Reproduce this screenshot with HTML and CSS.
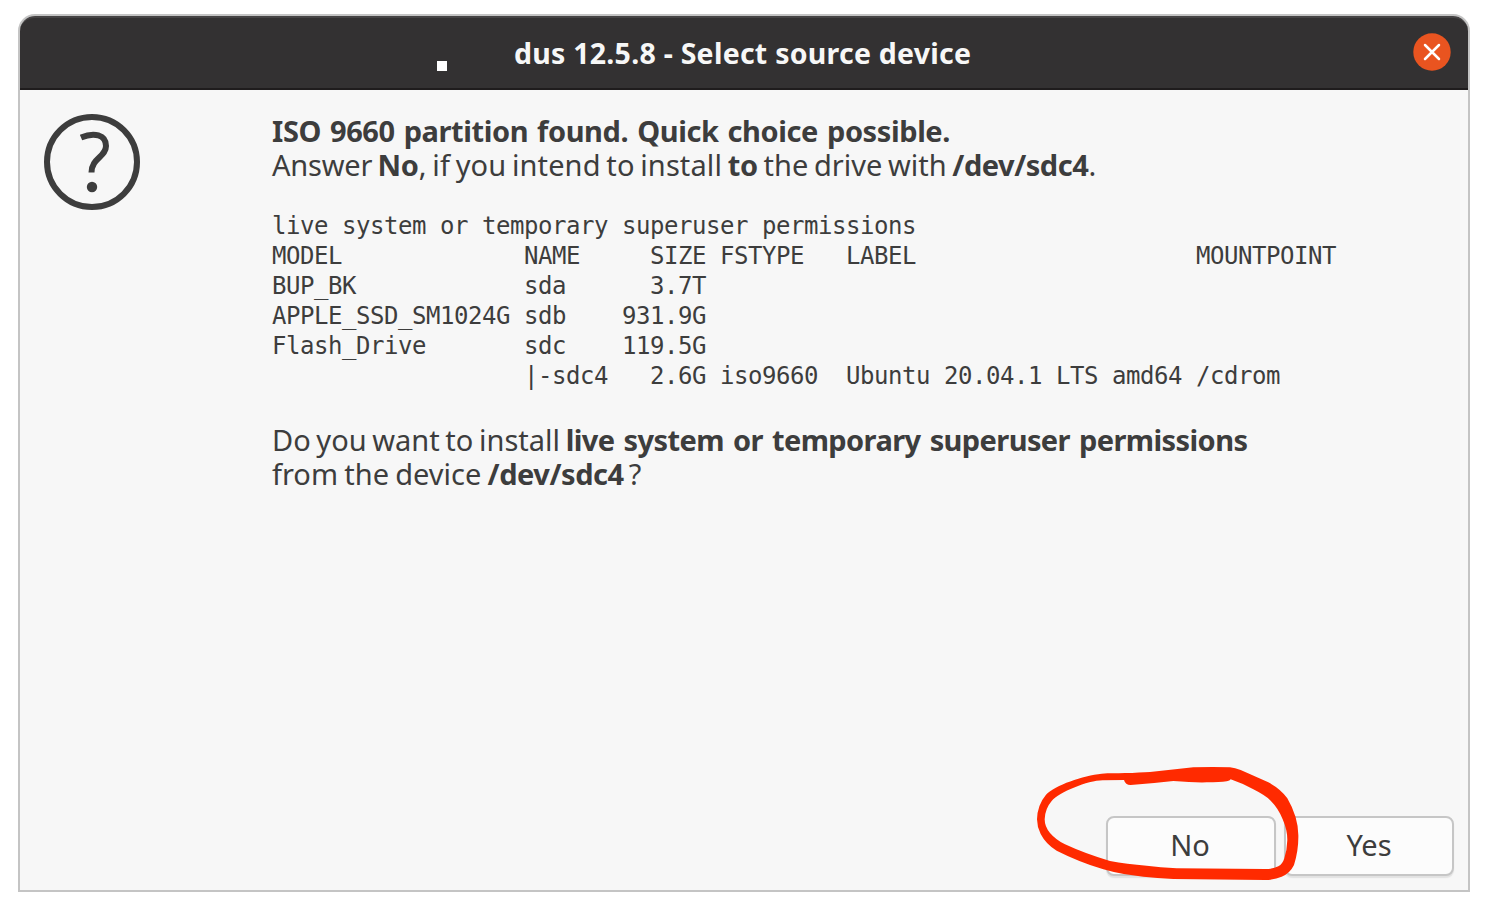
FILE: index.html
```
<!DOCTYPE html>
<html lang="en">
<head>
<meta charset="utf-8">
<title>dus 12.5.8 - Select source device</title>
<link rel="stylesheet" href="styles.css">
</head>
<body>
<div class="window">
  <header class="titlebar">
    <h1 class="title">dus 12.5.8 - Select source device</h1>
    <span class="speck"></span>
    <button class="close" aria-label="Close">
      <svg width="38" height="38" viewBox="0 0 38 38"><circle cx="19" cy="19" r="18.7" fill="#e95420"/><path d="M12 12 26 26M26 12 12 26" stroke="#fff" stroke-width="2.5" stroke-linecap="round"/></svg>
    </button>
  </header>
  <main class="content">
    <svg class="question" width="96" height="96" viewBox="0 0 96 96" fill="none" stroke="#3d3d3d">
      <circle cx="48" cy="48" r="45" stroke-width="6"/>
      <path d="M37 23.500C50 18 62 20.500 62 32C62 43 47.500 44 47.500 58.500" stroke-width="6"/>
      <circle cx="48" cy="73" r="5.200" fill="#3d3d3d" stroke="none"/>
    </svg>
    <div class="message">
      <p class="line"><b class="headline">ISO 9660 partition found. Quick choice possible.</b></p>
      <p class="line"><span class="answer">Answer </span><b>No</b><span class="intent">, if you intend to install </span><b>to</b><span class="target"> the drive with </span><b class="device">/dev/sdc4</b>.</p>
<pre class="devices">live system or temporary superuser permissions
MODEL             NAME     SIZE FSTYPE   LABEL                    MOUNTPOINT
BUP_BK            sda      3.7T
APPLE_SSD_SM1024G sdb    931.9G
Flash_Drive       sdc    119.5G
                  |-sdc4   2.6G iso9660  Ubuntu 20.04.1 LTS amd64 /cdrom</pre>
      <p class="line"><span class="target">Do you want to install </span><b class="system">live system or temporary superuser permissions</b></p>
      <p class="line"><span class="source">from the device </span><b class="device">/dev/sdc4</b><span class="mark"> ?</span></p>
    </div>
  </main>
  <footer class="actions">
    <button class="btn btn-no">No</button>
    <button class="btn">Yes</button>
    <svg class="scribble" width="468" height="160" viewBox="0 0 1404 480" fill="#ff2a00" fill-rule="evenodd">
      <path d="M245 71C268 69 290 70 315 69C345 69 370 67 390 66L520 52Q580 50 630 52Q645 54 662 60L745 97Q782 117 802 145Q834 200 835 255Q836 300 822 345Q810 370 785 380Q765 389 735 390L460 387Q410 384 370 380Q305 374 250 358Q175 335 110 302Q78 283 62 252Q51 230 51 208Q52 165 78 134C105 106 190 76 245 71Z
      M632 88Q670 101 700 118Q736 136 752 152Q776 176 788 208Q802 240 802 270Q801 300 793 325Q788 342 775 349Q760 357 735 357L470 355Q420 352 380 347Q320 343 270 333Q195 311 135 283Q108 270 90 249Q74 230 74 208Q75 176 95 153C118 127 205 90 250 91L312 90Q316 105 332 105Q400 100 460 93Q520 98 560 97Q600 97 620 94Q630 93 632 88Z"/>
    </svg>
  </footer>
</div>
</body>
</html>
```
FILE: styles.css
```
* { box-sizing: border-box; }
body {
  margin: 0;
  padding: 14px 18px 18px;
  background: #fff;
  color: #3d3d3d;
  font-family: "Noto Sans", sans-serif;
  font-size: 29px;
}
.window {
  width: 1452px;
  height: 878px;
  display: flex;
  flex-direction: column;
  border: 2px solid #c4c4c4;
  border-radius: 17px 17px 0 0;
  background: #f7f7f7;
}
.titlebar {
  position: relative;
  height: 74px;
  flex: none;
  display: flex;
  align-items: center;
  justify-content: flex-end;
  padding: 0 17px 2px 494px;
  background: #333132;
  border-top: 2px solid #454344;
  border-bottom: 2px solid #1f1c1d;
  border-radius: 15px 15px 0 0;
}
.title {
  flex: 1;
  margin: 0;
  padding-top: 2px;
  color: #f7f7f7;
  font-size: 28.500px;
  font-weight: 700;
  line-height: 40px;
  letter-spacing: 0.250px;
  white-space: nowrap;
}
.speck {
  position: absolute;
  left: 417px;
  top: 43px;
  width: 10px;
  height: 10px;
  background: #fff;
}
.close {
  width: 38px;
  height: 38px;
  padding: 0;
  border: 0;
  background: none;
}
.close svg { display: block; }
.content {
  flex: 1;
  display: flex;
  align-items: flex-start;
  gap: 132px;
  padding: 24px 24px 0;
}
.line {
  margin: 0;
  height: 34px;
  line-height: 34px;
  white-space: pre;
}
.line b { letter-spacing: -0.250px; }
.line .headline { letter-spacing: -0.400px; word-spacing: 1.800px; }
.line .system { letter-spacing: -0.600px; word-spacing: 2.200px; }
.line .device { letter-spacing: -0.450px; }
.answer { word-spacing: -2px; letter-spacing: -0.220px; }
.intent { word-spacing: -1.900px; letter-spacing: 0.100px; }
.target { word-spacing: -1.900px; }
.source { word-spacing: -1.300px; }
.mark { word-spacing: -2.500px; }
.devices {
  margin: 29px 0 32px;
  font-family: "DejaVu Sans Mono", monospace;
  font-size: 24px;
  line-height: 30px;
  letter-spacing: -0.449px;
}
.actions {
  position: relative;
  display: flex;
  justify-content: flex-end;
  gap: 8px;
  padding: 0 14px 14px;
}
.btn {
  width: 170px;
  height: 60px;
  padding: 0 0 4px;
  border: 2px solid #c6c6c6;
  border-radius: 8px;
  background: #fcfcfc;
  box-shadow: 0 2px 1px #e2e2e2;
  color: #3d3d3d;
  font: 29px "Noto Sans", sans-serif;
}
.btn-no { padding-right: 2px; }
.scribble {
  position: absolute;
  right: -20px;
  bottom: -20px;
  pointer-events: none;
}
```
